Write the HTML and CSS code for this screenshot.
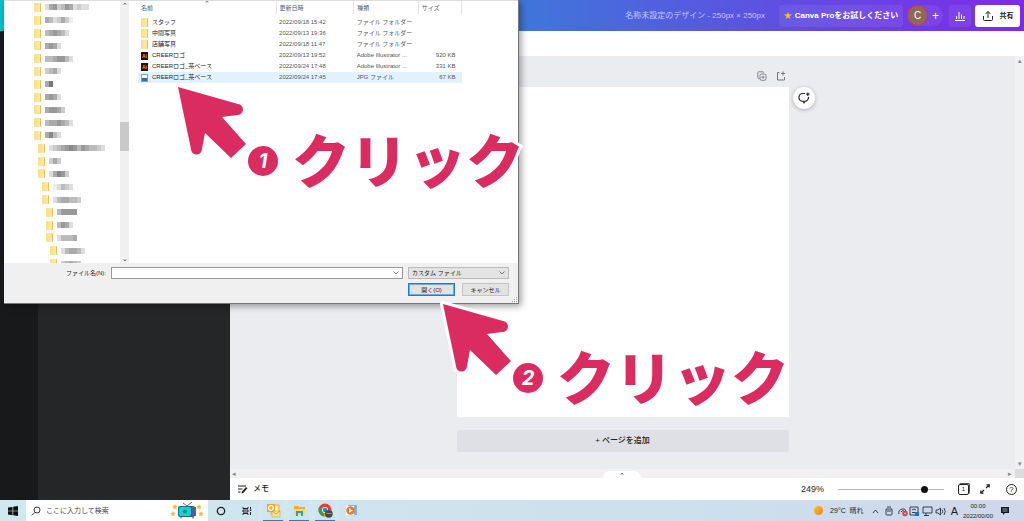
FILE: index.html
```html
<!DOCTYPE html>
<html lang="ja">
<head>
<meta charset="utf-8">
<title>名称未設定のデザイン</title>
<link rel="stylesheet" href="styles.css">
</head>
<body>
<div class="screen">
  <div class="app">
    <header class="topbar">
      <span class="doc-title">名称未設定のデザイン - 250px × 250px</span>
      <button class="try-pro"><span class="star">★</span>Canva Proをお試しください</button>
      <div class="members"><span class="avatar">C</span><button class="add-member" aria-label="メンバーを追加">+</button></div>
      <button class="stats" aria-label="統計"><svg viewBox="0 0 12 12" width="12" height="12"><path d="M1 10.5h10M2.5 9V6M5 9V2M7.5 9V4.500M10 9V6" fill="none" stroke="#fff"/></svg></button>
      <button class="share"><svg viewBox="0 0 12 12" width="12" height="12"><path d="M1.500 6v3.500q0 1 1 1h7q1 0 1-1V6M6 8V1.500M3.500 4 6 1.500 8.500 4" fill="none" stroke="#222"/></svg>共有</button>
    </header>
    <div class="workspace">
      <aside class="rail"></aside>
      <aside class="side-panel"></aside>
      <main class="editor">
        <div class="toolbar"></div>
        <div class="stage">
          <div class="canvas">
            <div class="page-tools">
              <svg viewBox="0 0 10 10" width="10" height="10"><g fill="none" stroke="#73767c" stroke-width=".9"><path d="M2.500 7.500H1.500q-.7 0-.7-.7V1.500q0-.7.7-.7h4.500q.7 0 .7.7"/><rect x="3" y="3" width="6" height="6.300" rx="1.500"/><path d="M6 4.700v3M4.500 6.200h3"/></g></svg>
              <svg viewBox="0 0 10 10" width="10" height="10"><path d="M3.500 1.500h-2v7.500h7V6M7 .5v4M5 2.500h4" fill="none" stroke="#73767c"/></svg>
            </div>
            <div class="page">
              <button class="comment" aria-label="コメント"><svg viewBox="0 0 14 14" width="14" height="14"><path d="M8 2.500H6a3.900 3.900 0 0 0-1 7.700l1.200.1.800 1.500.9-1.500a4 4 0 0 0 3.600-4.500M10.800 1.500v3.400M9.100 3.200h3.400" fill="none" stroke="#26282c" stroke-width="1.200"/></svg></button>
            </div>
            <button class="add-page">+ ページを追加</button>
          </div>
          <div class="vscroll"><span>▴</span><span>▾</span></div>
        </div>
        <div class="hscroll"><span>◂</span><span class="drawer">⌃</span><span class="hscroll-end">▸<i></i></span></div>
        <footer class="footer">
          <button class="memo"><svg viewBox="0 0 11 11" width="11" height="11"><path d="M1 2h8M1 5h4.500M1 8h2.500" stroke="#222" fill="none"/><path d="M4.500 9.500 5 7.500 9 3l1.400 1.300L6.300 9z" fill="#222"/></svg>メモ</button>
          <label class="zoom-label" for="zoom">249%</label>
          <input class="zoom" id="zoom" type="range" min="0" max="100" value="84">
          <button class="pages" aria-label="ページ一覧">1</button>
          <button class="bare" aria-label="全画面"><svg viewBox="0 0 10 10" width="10" height="10"><path d="M6.500.8h2.700v2.700M9.200.8 6 4M3.500 9.200H.8V6.500M.8 9.200 4 6" fill="none" stroke="#222" stroke-width="1.200"/></svg></button>
          <button class="help" aria-label="ヘルプ">?</button>
        </footer>
      </main>
    </div>
  </div>

  <footer class="taskbar">
    <button class="task start" aria-label="スタート"><svg viewBox="0 0 10 10" width="10" height="10"><path d="M0 1.500 4.500.9V4.700H0zM5.200.8 10 0v4.700H5.200zM0 5.300h4.500v3.900L0 8.600zM5.200 5.300H10V10l-4.800-.8z" fill="#111"/></svg></button>
    <div class="search">
      <svg viewBox="0 0 10 10" width="10" height="10"><circle cx="6" cy="4" r="3" fill="none" stroke="#333"/><path d="M4 6.300.8 9.500" stroke="#333"/></svg>
      <input type="text" aria-label="検索" placeholder="ここに入力して検索">
      <svg viewBox="0 0 34 17" width="34" height="17"><g fill="#f8bd35"><path id="s" d="m5 2 .9 1.700 1.900.3-1.400 1.300.3 2L5 6.400l-1.700.9.300-2L2.200 4l1.900-.3z"/><use href="#s" x="-2" y="7"/><use href="#s" x="24"/><use href="#s" x="26" y="7"/></g><path d="m13 1 4 3 5-4" fill="none" stroke="#445" stroke-width=".8"/><rect x="8" y="4" width="17" height="11" rx="2" fill="#1c6e86"/><rect x="9" y="5" width="12" height="9" rx="2" fill="#1ccfd0"/><path d="M22 5h4v9h-4z" fill="#5b5a9b"/><circle cx="15" cy="9.500" r="2" fill="#128e9c"/><path d="M11 15v1.500M23 15v1.500" stroke="#345"/></svg>
    </div>
    <button class="task" aria-label="Cortana"><svg viewBox="0 0 10 10" width="10" height="10"><circle cx="5" cy="5" r="3.700" fill="none" stroke="#222" stroke-width="1.300"/></svg></button>
    <button class="task" aria-label="タスクビュー"><svg viewBox="0 0 10 10" width="10" height="10"><path d="M1 1v1.500h5V1M1 9V7.500h5V9M1 4h5v2H1zM8.500 1v2M8.500 6v3" fill="none" stroke="#222"/><path d="M7.800 3.500h1.500V5H7.800z" fill="#222"/></svg></button>
    <button class="task open" aria-label="Outlook"><svg viewBox="0 0 15 15" width="15" height="15"><path d="M5 2h8v9H5z" fill="#fff1b8" stroke="#eda936"/><path d="M1 1h8v8H1z" fill="#f3a622"/><circle cx="5" cy="5" r="2.300" fill="none" stroke="#fff" stroke-width="1.300"/><path d="M6 8h8v6H6z" fill="#ffe18b" stroke="#d7a137" stroke-width=".6"/><path d="m6 8 4 3 4-3" fill="none" stroke="#c78b24" stroke-width=".7"/></svg></button>
    <button class="task open" aria-label="エクスプローラー"><svg viewBox="0 0 13 13" width="13" height="13"><path d="M1 2h4l1 1h6v8H1z" fill="#f0ae2c"/><path d="M1 5h11v6H1z" fill="#ffd96a"/><path d="M3 7h7v5H8V9H5v3H3z" fill="#3c93d8"/></svg></button>
    <button class="task open" aria-label="Chrome"><svg viewBox="0 0 15 15" width="15" height="15"><circle cx="7" cy="7" r="6.500" fill="#e3402f"/><path d="M7 7 1.400 3.700A6.500 6.500 0 0 0 6 13.400z" fill="#2ba24c"/><path d="M7 7h6.500A6.500 6.500 0 0 1 6 13.400z" fill="#fbc116"/><circle cx="7" cy="7" r="3" fill="#fff"/><circle cx="7" cy="7" r="2.300" fill="#3b78e7"/><circle cx="10.800" cy="10.800" r="3.900" fill="#49464a"/><path d="M8.500 10.500h5" stroke="#998" /></svg></button>
    <button class="task" aria-label="メディア"><svg viewBox="0 0 13 13" width="13" height="13"><path d="M3 1h9v10H3z" fill="#7bb3e3"/><path d="M1 2h8v9H1z" fill="#fff"/><circle cx="5.500" cy="6.500" r="4.300" fill="#ee7a27"/><path d="m4.200 4.300 3.600 2.200-3.600 2.200z" fill="#fff"/></svg></button>
    <div class="tray">
      <span class="sun"></span><span class="weather">29°C&nbsp; 晴れ</span>
      <svg viewBox="0 0 80 12" width="80" height="12"><g fill="none" stroke="#26303a" stroke-width=".9"><path d="m2 8 2.500-3L7 8M16 2h4M15 4h6v5q0 1-1 1h-4q-1 0-1-1zM16 6h4"/><path d="M28 9q-1-4 3-5 3-1 4 2M30 7q1-2 3-1"/><path d="M39 2h8v8h-8zM41 5q2-2 4 0M41 7.500h3M52 2h9v6h-9zM55 8v2.500M53 10.500h5"/><path d="M65 5h2l2.500-2v7L67 8h-2zM71 4.500q1.500 2 0 4M73 3q2.500 3.500 0 7"/></g><circle cx="34" cy="8.500" r="2.700" fill="#dc3442"/><path d="m33 7.500 2 2m0-2-2 2" stroke="#fff" stroke-width=".7"/><path d="M44 7h4v4h-4z" fill="#1a72cc"/></svg>
      <span class="ime">A</span>
      <span class="clock">00:00<br>2022/00/00</span>
      <svg viewBox="0 0 10 10" width="10" height="10"><path d="M1 1h8v6H5L3 9V7H1z" fill="#151a20"/><path d="M2.500 3h5M2.500 5h5" stroke="#ccd9eb" stroke-width=".7"/></svg>
    </div>
  </footer>

  <section class="dialog" aria-label="開く">
    <div class="browser">
      <div class="tree-pane"><ul class="tree" id="tree"></ul></div>
      <div class="tree-scroll"><span>⌃</span><i></i><span>⌄</span></div>
      <div class="files">
        <span class="sort">⌃</span>
        <table>
          <colgroup><col class="c-name"><col class="c-date"><col class="c-kind"><col class="c-size"></colgroup>
          <thead><tr><th>名前</th><th>更新日時</th><th>種類</th><th>サイズ</th></tr></thead>
          <tbody>
            <tr><td><i class="folder"></i>スタッフ</td><td>2022/09/18 15:42</td><td>ファイル フォルダー</td><td></td></tr>
            <tr><td><i class="folder"></i>中間写真</td><td>2022/09/13 19:36</td><td>ファイル フォルダー</td><td></td></tr>
            <tr><td><i class="folder"></i>店舗写真</td><td>2022/09/18 11:47</td><td>ファイル フォルダー</td><td></td></tr>
            <tr><td><i class="ai">Ai</i>CREERロゴ</td><td>2022/09/13 19:52</td><td>Adobe Illustrator ...</td><td>920 KB</td></tr>
            <tr><td><i class="ai">Ai</i>CREERロゴ_茶ベース</td><td>2022/09/24 17:48</td><td>Adobe Illustrator ...</td><td>331 KB</td></tr>
            <tr class="selected"><td><i class="jpg"></i>CREERロゴ_茶ベース</td><td>2022/09/24 17:45</td><td>JPG ファイル</td><td>67 KB</td></tr>
          </tbody>
        </table>
      </div>
    </div>
    <form class="dialog-form">
      <label for="fname">ファイル名(N):</label>
      <div class="combo"><input id="fname" type="text"><svg viewBox="0 0 6 4" width="6" height="4"><path d="m.5.5 2.500 2.500L5.500.5" fill="none" stroke="#555" stroke-width=".8"/></svg></div>
      <div class="combo gray"><select aria-label="ファイルの種類"><option>カスタム ファイル</option></select><svg viewBox="0 0 6 4" width="6" height="4"><path d="m.5.5 2.500 2.500L5.500.5" fill="none" stroke="#555" stroke-width=".8"/></svg></div>
      <div class="actions"><button type="button" class="primary">開く(O)</button><button type="button">キャンセル</button></div>
    </form>
    <svg class="grip" viewBox="0 0 6 6" width="6" height="6"><path d="M4 0h1v1H4zM4 2h1v1H4zM2 2h1v1H2zM4 4h1v1H4zM2 4h1v1H2zM0 4h1v1H0z" fill="#aaa"/></svg>
  </section>

  <div class="note first">
    <svg class="arrow" viewBox="0 0 76 80" width="76" height="80"><path id="arrow" d="M4 5 64 22a5.500 5.500 0 0 1-1 11L48 35l24 27-15 14-26-25-3 16a5.500 5.500 0 0 1-11 0z"/></svg>
    <span class="num">1</span><span class="word">クリック</span>
  </div>
  <div class="note second">
    <svg class="arrow" viewBox="0 0 76 80" width="76" height="80"><use href="#arrow"/></svg>
    <span class="num">2</span><span class="word">クリック</span>
  </div>
</div>
<script src="tree.js"></script>
</body>
</html>
```
FILE: styles.css
```css
* { box-sizing: border-box; }
body { margin: 0; font: 8px/12px "Liberation Sans", "Noto Sans CJK JP", sans-serif; color: #222; }
button, input, select { font: inherit; color: inherit; margin: 0; padding: 0; border: 0; background: none; }
svg { display: block; flex: none; }
i { font-style: normal; }
.screen { position: relative; height: 100vh; display: flex; flex-direction: column; overflow: hidden; }
.app { flex: 1; min-height: 0; display: flex; flex-direction: column; }

.topbar { height: 31px; flex: none; display: flex; align-items: center; justify-content: flex-end; padding-right: 4px; color: #fff; background: linear-gradient(90deg, #00c4cc, #7d2ae8); }
.doc-title { color: #c6c5fb; margin-right: 14px; }
.try-pro { height: 22px; width: 124px; border-radius: 3px; background: #ffffff12; font-weight: 700; white-space: nowrap; }
.star { color: #fdbc2e; margin-right: 3px; }
.members { display: flex; align-items: center; margin-left: 4px; border-radius: 11px; background: #ffffff12; }
.avatar { width: 21px; height: 21px; border-radius: 50%; border: 1px solid #d82c52; background: #8c6a58; font-size: 10px; line-height: 19px; text-align: center; }
.add-member { width: 15px; font-size: 12px; }
.stats { width: 22px; height: 22px; margin: 0 4px 0 6px; padding: 5px; border-radius: 3px; background: #ffffff12; }
.share { width: 45px; height: 22px; display: flex; align-items: center; justify-content: center; gap: 6px; border-radius: 3px; background: #fff; color: #222; font-weight: 700; font-size: 7px; }

.workspace { flex: 1; min-height: 0; display: flex; }
.rail { width: 38px; background: #18191b; }
.side-panel { width: 192px; background: #252627; }
.editor { flex: 1; min-width: 0; display: flex; flex-direction: column; background: #ebecf0; }
.toolbar { height: 25px; flex: none; background: #fff; }
.stage { flex: 1; min-height: 0; display: flex; }
.canvas { flex: 1; display: flex; flex-direction: column; align-items: center; padding-top: 14px; }
.page-tools { width: 332px; height: 17px; display: flex; justify-content: flex-end; gap: 9px; padding: 1px 3px; }
.page { position: relative; width: 332px; aspect-ratio: 332 / 330; background: #fff; }
.comment { position: absolute; left: 100%; top: 0; margin-left: 4px; width: 22px; height: 22px; padding: 4px; border-radius: 50%; background: #fff; box-shadow: 0 1px 4px #0004; }
.add-page { width: 332px; height: 22px; margin-top: 13px; border-radius: 2px; background: #dfe0e5; font-weight: 500; }
.vscroll { width: 9px; display: flex; flex-direction: column; justify-content: space-between; align-items: center; background: #f1f1f2; color: #888; font-size: 7px; line-height: 10px; }
.hscroll { height: 9px; flex: none; display: flex; justify-content: space-between; background: #f1f1f2; color: #888; font-size: 7px; line-height: 9px; padding-left: 2px; }
.drawer { width: 38px; height: 7px; align-self: flex-end; border-radius: 8px 8px 0 0; background: #fff; text-align: center; color: #222; }
.hscroll-end { display: flex; gap: 3px; }
.hscroll-end i { width: 9px; background: #dcdcdc; }
.footer { height: 22px; flex: none; display: flex; align-items: center; padding: 0 7px; background: #fff; font-size: 9px; }
.memo { display: flex; align-items: center; gap: 5px; margin-right: auto; font-weight: 500; font-size: 8px; }
.zoom { appearance: none; width: 106px; height: 12px; margin: 0 14px; background: linear-gradient(#b5b7bd, #b5b7bd) center / 100% 1px no-repeat; }
.zoom::-webkit-slider-thumb { appearance: none; width: 7px; height: 7px; border-radius: 50%; background: #111; }
.pages { width: 11px; height: 11px; border: 1px solid #222; border-radius: 2px; box-shadow: 1px -1px 0 #555; font-size: 6px; line-height: 8px; margin-right: 11px; }
.bare { margin-right: 16px; }
.help { width: 11px; height: 11px; border: 1px solid #222; border-radius: 50%; font-size: 8px; line-height: 9px; }

.taskbar { height: 21px; flex: none; display: flex; background: linear-gradient(90deg, #d0e8f0, #cde0ec 65%, #cfd7ea); }
.task { width: 26px; display: flex; align-items: center; justify-content: center; }
.open { box-shadow: inset 3px 0 #d0e8f0, inset -3px 0 #d0e8f0, inset 0 -1px #1784d8; }
.search { width: 182px; display: flex; align-items: center; gap: 5px; padding: 0 4px 0 5px; background: #fff; }
.search input { flex: 1; min-width: 0; font-size: 7px; }
.search input::placeholder { color: #444; opacity: 1; }
.tray { display: flex; align-items: center; margin-left: auto; padding-right: 14px; color: #222; }
.sun { width: 9px; height: 9px; border-radius: 50%; background: linear-gradient(135deg, #ffc22e, #f57c0c); margin-right: 7px; }
.weather { margin-right: 7px; white-space: nowrap; font-size: 7px; }
.ime { font-size: 11px; margin-right: 5px; }
.clock { font-size: 6px; line-height: 10px; text-align: center; margin-right: 7px; }

.dialog { position: absolute; left: 4px; top: 0; width: 515px; display: flex; flex-direction: column; background: #f0f0f0; border-right: 1px solid #777; border-bottom: 1px solid #777; box-shadow: 2px 2px 7px #0006; }
.browser { height: 263px; display: flex; background: #fff; border-top: 1px solid #ddd; }
.tree-pane { width: 116px; overflow: hidden; }
.tree { height: 269px; margin: 0; padding: 0 0 0 30px; list-style: none; display: grid; grid-auto-rows: 1fr; }
.tree li { display: flex; align-items: center; }
.folder { width: 7px; height: 9px; flex: none; border-radius: 1px; background: linear-gradient(90deg, #fbdf86, #ffe9a2); border-right: 1px solid #e9c04e; }
.blot { display: flex; margin-left: 4px; }
.blot i { width: 4px; height: 6px; background: #555; }
.step { width: 4px; flex: none; }
.tree-scroll { width: 9px; display: flex; flex-direction: column; background: #f0f0f0; font-size: 7px; line-height: 9px; text-align: center; color: #333; }
.tree-scroll i { height: 29px; margin-top: 112px; margin-bottom: auto; background: #c9c9c9; }
.files { position: relative; flex: 1; padding-left: 9px; color: #555; }
.sort { position: absolute; left: 75px; top: -1px; font-size: 7px; line-height: 8px; }
table { table-layout: fixed; width: 324px; border-collapse: collapse; font-size: 6px; }
.c-name { width: 137px; } .c-date { width: 77px; } .c-kind { width: 64px; } .c-size { width: 43px; }
th { height: 13px; padding: 0 3px; text-align: left; font-weight: 400; color: #4c607a; border-right: 1px solid #e3e3e3; }
thead::after { content: ""; display: block; height: 3px; }
td { height: 11px; line-height: 11px; padding: 0 3px; white-space: nowrap; }
td:first-child { display: flex; align-items: center; gap: 4px; color: #222; }
td:last-child { text-align: right; padding-right: 6px; }
.selected { background: #e1f2fe; }
.ai { width: 7px; height: 8px; background: #2b0d00; color: #f79a1c; font: 700 5px/8px "Liberation Sans", sans-serif; text-align: center; }
.jpg { width: 7px; height: 8px; border: 1px solid #8b9db3; background: linear-gradient(#fff 45%, #276fb5 45%); }

.dialog-form { display: grid; grid-template-columns: 102px 292px 101px; column-gap: 5px; row-gap: 4px; align-items: center; padding: 4px 0 7px; font-size: 6px; }
.dialog-form label { text-align: right; }
.combo { height: 12px; display: flex; align-items: center; padding: 0 3px; background: #fff; border: 1px solid #999; }
.combo input, .combo select { flex: 1; min-width: 0; height: 10px; appearance: none; outline: 0; line-height: 10px; }
.gray { background: #e3e3e3; border-color: #bbb; }
.actions { grid-column: 3; display: grid; grid-template-columns: 1fr 1fr; gap: 7px; }
.actions button { height: 13px; border: 1px solid #c4c4c4; background: #e2e2e2; line-height: 10px; }
.actions .primary { border: 1px solid #1580d8; box-shadow: inset 0 0 0 1px #63aee8; }
.grip { position: absolute; right: 0; bottom: 0; }

.note { position: absolute; display: flex; align-items: flex-end; }
.first { left: 174px; top: 82px; }
.second { left: 439px; top: 299px; }
.arrow { margin-bottom: 31px; overflow: visible; fill: #da2c61; stroke: #fff; stroke-width: 6px; stroke-linejoin: round; paint-order: stroke; }
.num { width: 30px; height: 30px; margin: 0 14px 17px -2px; border-radius: 50%; background: #da2c61; color: #fff; font: italic 700 20px/30px Inter, "Liberation Sans", sans-serif; text-align: center; }
.word { padding-bottom: 6px; color: #da2c61; font: 900 58px/58px "Noto Sans CJK JP", sans-serif; white-space: nowrap; -webkit-text-stroke: 6px #fff; paint-order: stroke fill; }
```
FILE: tree.js
```js
// One row per folder: indent level, then the tone of each mosaic cell (0-9).
const rows = [
  [0, "25634652322"], [0, "5423531"], [0, "456542"], [0, "5652"], [0, "4456642"],
  [0, "3452"], [0, "58"], [0, "5652"], [0, "56653"], [0, "4556542"],
  [0, "5742"], [1, "23456764654432"], [1, "353"], [1, "25763"], [2, "12432"],
  [2, "2455443"], [3, "46666"], [3, "4652"], [3, "24445"], [4, "245542"], [4, "34543"]
];
const tree = document.getElementById("tree");
for (const [level, tones] of rows) {
  const li = document.createElement("li");
  for (let n = 0; n < level; n++) {
    li.append(Object.assign(document.createElement("span"), { className: "step" }));
  }
  li.append(Object.assign(document.createElement("i"), { className: "folder" }));
  const blot = Object.assign(document.createElement("span"), { className: "blot" });
  for (const tone of tones) {
    const cell = document.createElement("i");
    cell.style.opacity = tone / 10;
    blot.append(cell);
  }
  li.append(blot);
  tree.append(li);
}
```
